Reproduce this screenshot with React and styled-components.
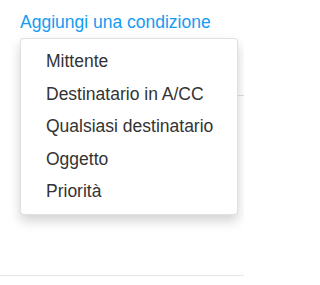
import React from "react";
import styled, { createGlobalStyle } from "styled-components";

const Global = createGlobalStyle`
  html, body { margin: 0; padding: 0; background: #fff; }
  body { font-family: "Liberation Sans", Arial, sans-serif; }
`;

const Page = styled.div`
  position: relative;
  width: 244px;
  height: 285px;
  overflow: hidden;
  background: #fff;
`;

const Section = styled.div`
  padding: 11px 0 0 20px;
  height: 276px;
  border-bottom: 1px solid #e6e6e6;
  box-sizing: border-box;
`;

const AddLink = styled.a`
  display: inline-block;
  font-size: 17.5px;
  line-height: 22px;
  color: #149bf2;
  text-decoration: none;
  cursor: pointer;
`;

const ConditionRow = styled.div`
  margin-top: 30px;
  height: 32px;
  border-bottom: 1px solid #ddd;
  font-size: 16px;
  color: #333;
  line-height: 22px;
`;

const ActionLink = styled.a`
  display: block;
  margin-top: 96px;
  font-size: 17.5px;
  color: #149bf2;
  line-height: 22px;
`;

const Menu = styled.ul`
  position: absolute;
  left: 20px;
  top: 38px;
  width: 218px;
  box-sizing: border-box;
  margin: 0;
  padding: 6px 0 6px;
  list-style: none;
  background: #fff;
  border: 1px solid rgba(0, 0, 0, 0.12);
  border-radius: 4px;
  box-shadow: 0 6px 12px rgba(0, 0, 0, 0.175);
`;

const Item = styled.li`
  padding: 0 0 0 25px;
  height: 32.5px;
  line-height: 32px;
  font-size: 17.5px;
  color: #333;
  white-space: nowrap;
  cursor: pointer;
`;

const items = [
  "Mittente",
  "Destinatario in A/CC",
  "Qualsiasi destinatario",
  "Oggetto",
  "Priorità",
];

export default function App() {
  return (
    <Page>
      <Global />
      <Section>
        <AddLink>Aggiungi una condizione</AddLink>
        <ConditionRow>Tutti i messaggi</ConditionRow>
        <ActionLink>Aggiungi un'azione</ActionLink>
      </Section>
      <Menu>
        {items.map((t) => (
          <Item key={t}>{t}</Item>
        ))}
      </Menu>
    </Page>
  );
}
